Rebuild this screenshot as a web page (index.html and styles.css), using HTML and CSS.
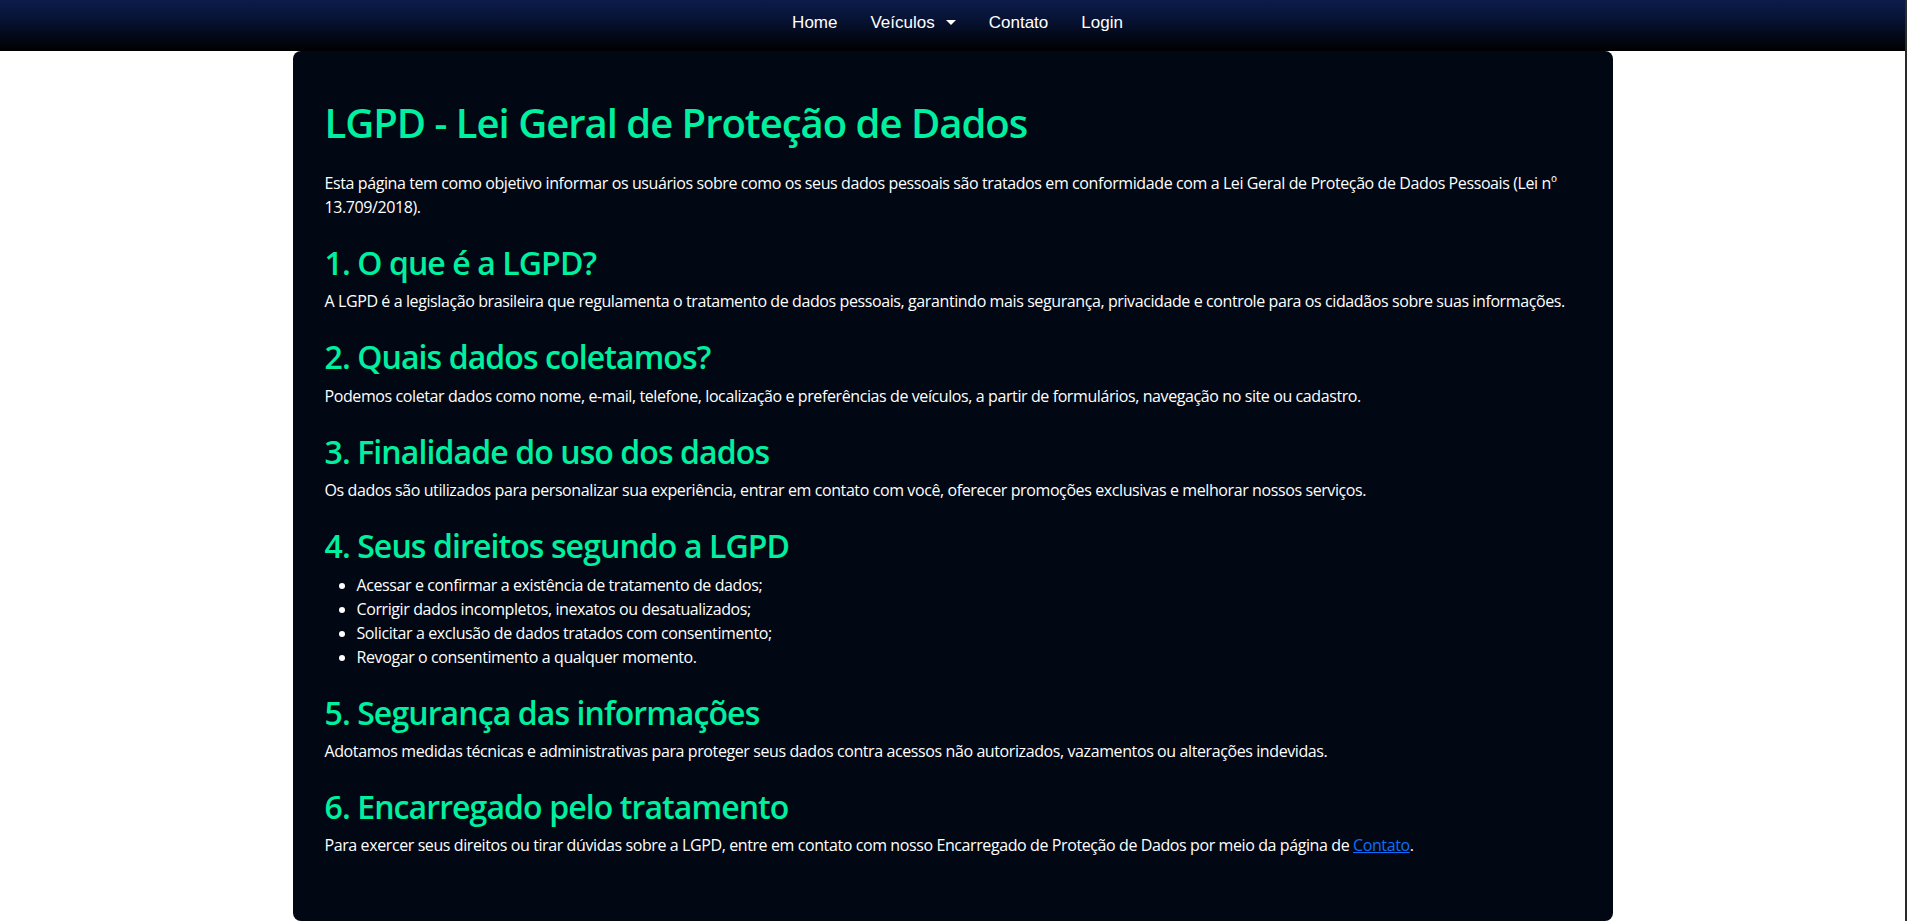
FILE: index.html
```html
<!DOCTYPE html>
<html lang="pt-BR">
<head>
<meta charset="utf-8">
<title>LGPD - Lei Geral de Proteção de Dados</title>
<link rel="stylesheet" href="styles.css">
</head>
<body>
<div class="page">
  <nav class="navbar">
    <ul class="nav-list">
      <li><a class="nav-link" href="#">Home</a></li>
      <li><a class="nav-link dropdown" href="#">Veículos<span class="caret"></span></a></li>
      <li><a class="nav-link" href="#">Contato</a></li>
      <li><a class="nav-link" href="#">Login</a></li>
    </ul>
  </nav>
  <main class="card">
    <h1 class="title">LGPD - Lei Geral de Proteção de Dados</h1>
    <p class="intro">Esta página tem como objetivo informar os usuários sobre como os seus dados pessoais são tratados em conformidade com a Lei Geral de Proteção de Dados Pessoais (Lei nº 13.709/2018).</p>

    <h2 class="section-title">1. O que é a LGPD?</h2>
    <p>A LGPD é a legislação brasileira que regulamenta o tratamento de dados pessoais, garantindo mais segurança, privacidade e controle para os cidadãos sobre suas informações.</p>

    <h2 class="section-title">2. Quais dados coletamos?</h2>
    <p>Podemos coletar dados como nome, e-mail, telefone, localização e preferências de veículos, a partir de formulários, navegação no site ou cadastro.</p>

    <h2 class="section-title">3. Finalidade do uso dos dados</h2>
    <p>Os dados são utilizados para personalizar sua experiência, entrar em contato com você, oferecer promoções exclusivas e melhorar nossos serviços.</p>

    <h2 class="section-title">4. Seus direitos segundo a LGPD</h2>
    <ul class="rights">
      <li>Acessar e confirmar a existência de tratamento de dados;</li>
      <li>Corrigir dados incompletos, inexatos ou desatualizados;</li>
      <li>Solicitar a exclusão de dados tratados com consentimento;</li>
      <li>Revogar o consentimento a qualquer momento.</li>
    </ul>

    <h2 class="section-title">5. Segurança das informações</h2>
    <p>Adotamos medidas técnicas e administrativas para proteger seus dados contra acessos não autorizados, vazamentos ou alterações indevidas.</p>

    <h2 class="section-title">6. Encarregado pelo tratamento</h2>
    <p>Para exercer seus direitos ou tirar dúvidas sobre a LGPD, entre em contato com nosso Encarregado de Proteção de Dados por meio da página de <a class="link" href="#">Contato</a>.</p>
  </main>
</div>
</body>
</html>
```

FILE: styles.css
```css
html, body {
  margin: 0;
  padding: 0;
}

body {
  background: #ffffff;
  font-family: "Open Sans", "Noto Sans", sans-serif;
  font-size: 16px;
  line-height: 1.5;
  letter-spacing: -0.4px;
  color: #ffffff;
  overflow: hidden;
}

.page {
  min-height: 921px;
  border-right: 2px solid #2b2b2b;
  box-sizing: border-box;
}

.navbar {
  height: 51px;
  background: linear-gradient(180deg, #0c1c4a 0%, #071233 40%, #000000 100%);
  display: flex;
  justify-content: center;
  align-items: center;
  padding-left: 10px;
}

.nav-list {
  list-style: none;
  margin: 0;
  padding: 0;
  display: flex;
}

.nav-link {
  display: flex;
  align-items: center;
  padding: 8px 16.5px;
  font-family: "Liberation Sans", Arial, sans-serif;
  font-size: 17px;
  letter-spacing: 0;
  color: #ffffff;
  text-decoration: none;
  margin-top: -6px;
}

.caret {
  display: inline-block;
  margin-left: 11px;
  width: 0;
  height: 0;
  border-top: 5px solid #ffffff;
  border-left: 5px solid transparent;
  border-right: 5px solid transparent;
}

.card {
  width: 1320px;
  box-sizing: border-box;
  margin: 0 auto;
  background: #010814;
  border-radius: 8px;
  padding: 48px 32px;
}

.title {
  margin: 0 0 24px;
  font-size: 40px;
  font-weight: 600;
  line-height: 1.2;
  letter-spacing: -1px;
  color: #00f0a0;
}

.section-title {
  margin: 25px 0 7px;
  font-size: 32px;
  font-weight: 600;
  line-height: 1.2;
  letter-spacing: -0.9px;
  color: #00f0a0;
}

p {
  margin: 0 0 16px;
}

.rights {
  margin: 0 0 16px;
  padding-left: 32px;
}

.link {
  color: #0d6efd;
  text-decoration: underline;
}
```
